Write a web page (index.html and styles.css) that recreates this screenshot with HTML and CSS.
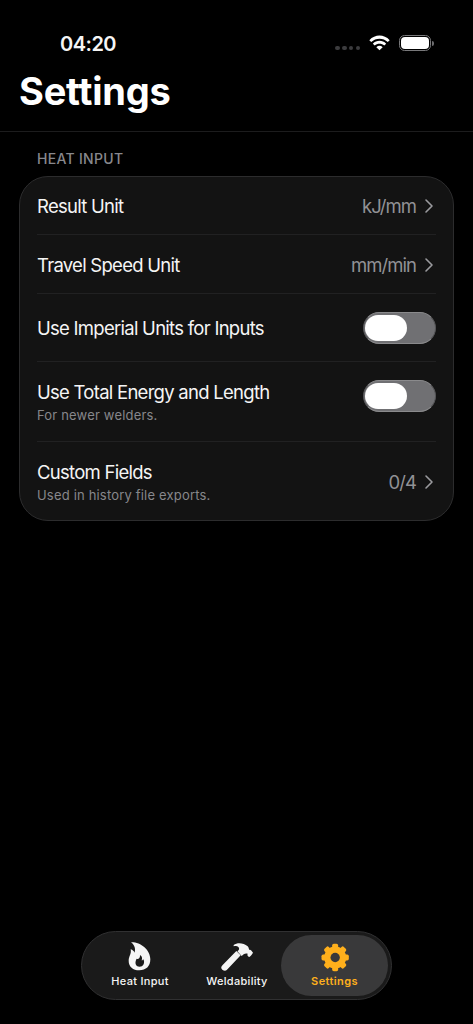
FILE: index.html
```html
<!DOCTYPE html>
<html lang="en">
<head>
  <meta charset="UTF-8" />
  <meta name="viewport" content="width=device-width, initial-scale=1" />
  <title>Settings</title>
  <link rel="stylesheet" href="styles.css">
</head>
<body>
  <div class="screen">
    <div class="status-bar">
      <span class="time">04:20</span>
      <div class="status-icons">
        <div class="dots"><i></i><i></i><i></i><i></i></div>
        <svg class="wifi" viewBox="0 0 66 48">
          <path d="M1 15 C19 -4 47 -4 65 15 L59 21 C45 7 21 7 7 21Z" />
          <path d="M12 26 C24 14 42 14 54 26 L48 32 C40 24 26 24 18 32Z" />
          <path d="M23 37 C29 31 37 31 43 37 L33 47Z" />
        </svg>
        <div class="battery"><div class="level"></div></div>
        <div class="battery-cap"></div>
      </div>
    </div>

    <header class="header">
      <h1>Settings</h1>
    </header>

    <main class="content">
      <h2>HEAT INPUT</h2>
      <div class="card">
        <div class="row row-result">
          <span class="label">Result Unit</span>
          <span class="value">kJ/mm</span>
          <svg class="chevron" viewBox="0 0 8 14"><path d="M1 1l6 6-6 6" /></svg>
        </div>
        <div class="row row-speed">
          <span class="label">Travel Speed Unit</span>
          <span class="value">mm/min</span>
          <svg class="chevron" viewBox="0 0 8 14"><path d="M1 1l6 6-6 6" /></svg>
        </div>
        <div class="row row-imperial">
          <span class="label">Use Imperial Units for Inputs</span>
          <div class="toggle"><div class="knob"></div></div>
        </div>
        <div class="row row-energy">
          <div class="text">
            <div class="label">Use Total Energy and Length</div>
            <div class="hint">For newer welders.</div>
          </div>
          <div class="toggle"><div class="knob"></div></div>
        </div>
        <div class="row row-custom">
          <div class="text">
            <div class="label">Custom Fields</div>
            <div class="hint">Used in history file exports.</div>
          </div>
          <span class="value">0/4</span>
          <svg class="chevron" viewBox="0 0 8 14"><path d="M1 1l6 6-6 6" /></svg>
        </div>
      </div>
    </main>

    <nav class="tab-bar">
      <div class="tab">
        <svg class="icon" viewBox="0 0 120 108">
          <path fill-rule="evenodd" d="M33 13 C62 12 91 36 91 64 C91 85 78 97 58 97 C39 97 26 86 26 68 C26 55 35 48 32 34 C38 36 42 40 44 44 C47 32 44 21 33 13Z M60 51 C61 60 54 65 50 62 C44 72 45 86 59 86 C70 86 73 77 72 69 C71 65 69 62 68 66 C66 68 64 68 66 63 C67 58 64 53 60 51Z" />
        </svg>
        <span>Heat Input</span>
      </div>
      <div class="tab">
        <svg class="icon" viewBox="6 0 120 108">
          <path d="M64 39 L77 52 L36 95 C32 100 27 99 22 95 C17 90 18 86 23 81Z" />
          <path d="M56 21 C68 12 86 15 98 25 C102 29 101 33 103 36 C106 34 109 37 114 44 C111 49 107 54 103 57 C98 55 96 51 98 47 C94 46 90 46 86 49 L80 54 L67 40 C73 36 74 31 70 27 C66 23 61 24 56 25Z" />
        </svg>
        <span>Weldability</span>
      </div>
      <div class="tab active">
        <svg class="icon" viewBox="0 0 120 108">
          <g transform="translate(60.5 58.5)">
            <circle r="33" />
            <rect x="-9" y="-41" width="18" height="82" rx="5" />
            <rect x="-9" y="-41" width="18" height="82" rx="5" transform="rotate(45)" />
            <rect x="-9" y="-41" width="18" height="82" rx="5" transform="rotate(90)" />
            <rect x="-9" y="-41" width="18" height="82" rx="5" transform="rotate(135)" />
            <circle class="hole" r="14" />
          </g>
        </svg>
        <span>Settings</span>
      </div>
    </nav>
  </div>
</body>
</html>
```
FILE: styles.css
```css
* { box-sizing: border-box; }

body {
  margin: 0;
  background: #000;
  color: #f5f5f5;
  font-family: Inter, "Liberation Sans", sans-serif;
}

.screen {
  display: flex;
  flex-direction: column;
  height: 1024px;
  width: 473px;
}

.status-bar {
  display: flex;
  justify-content: space-between;
  height: 68px;
  padding: 31px 39px 0 60px;
}

.time {
  font-size: 20px;
  line-height: 26px;
  font-weight: 600;
  letter-spacing: -0.5px;
}

.status-icons {
  display: flex;
  align-items: center;
  height: 24px;
}

.dots {
  display: flex;
  gap: 2.2px;
  margin: 10px 9px 0 0;
}

.dots i {
  width: 4.5px;
  height: 4.5px;
  border-radius: 50%;
  background: #3c3c3e;
}

.wifi {
  width: 21px;
  height: 16px;
  fill: #fff;
  margin-right: 9px;
}

.battery {
  width: 32px;
  height: 16px;
  padding: 1px;
  border: 1px solid #78787a;
  border-radius: 5.5px;
}

.level {
  height: 100%;
  border-radius: 4px;
  background: #fff;
}

.battery-cap {
  width: 2px;
  height: 5px;
  margin-left: 1px;
  border-radius: 0 2px 2px 0;
  background: #6c6c6e;
}

.header {
  height: 64px;
  padding-left: 19px;
  border-bottom: 1px solid #1c1c1d;
}

h1 {
  margin: 0;
  color: #fff;
  font-size: 38px;
  line-height: 46px;
  font-weight: 700;
  letter-spacing: -0.2px;
}

.content {
  flex: 1;
  padding: 17px 19px 0;
}

h2 {
  margin: 0 0 7px 18px;
  font-size: 14px;
  line-height: 20px;
  font-weight: 500;
  letter-spacing: 0.3px;
  color: #88888d;
}

.card {
  height: 345px;
  padding: 0 17px;
  border: 1px solid #2c2c2d;
  border-radius: 29px;
  background: #131313;
}

.row {
  display: flex;
  align-items: center;
  border-bottom: 1px solid #212122;
}

.row-result { height: 58px; }
.row-speed { height: 59px; padding-top: 1px; }
.row-imperial { height: 68px; }
.row-energy { height: 80px; }
.row-custom { height: 78px; padding-top: 2px; border-bottom: none; }

.label {
  flex: 1;
  padding: 1px 0;
  font-size: 18.5px;
  line-height: 24px;
  letter-spacing: -0.73px;
  white-space: nowrap;
}

.text {
  flex: 1;
  padding-top: 1px;
}

.row-custom .text {
  padding: 0 0 1px;
}

.hint {
  font-size: 13px;
  line-height: 20px;
  letter-spacing: 0.18px;
  color: #87878b;
}

.value {
  padding: 1px 0;
  font-size: 18.5px;
  line-height: 24px;
  letter-spacing: -0.95px;
  color: #919195;
}

.chevron {
  width: 8px;
  height: 14px;
  margin: 0 3px 0 9px;
  overflow: visible;
  fill: none;
  stroke: #9a9a9e;
  stroke-width: 1.6;
  stroke-linecap: round;
  stroke-linejoin: round;
}

.toggle {
  width: 73px;
  height: 32px;
  padding: 2px 1px;
  border: 1px solid #565658;
  border-top-color: #8a8a8c;
  border-bottom-color: #8a8a8c;
  border-radius: 16px;
  background: #707073;
}

.row-energy .toggle { margin-bottom: 11px; }

.knob {
  width: 42px;
  height: 26px;
  border-radius: 13px;
  background: #fff;
}

.tab-bar {
  display: flex;
  width: 311px;
  height: 69px;
  margin: 0 0 24px 81px;
  padding: 3px;
  border: 1px solid #303031;
  border-radius: 35px;
  background: #1a1a1a;
}

.tab {
  display: flex;
  flex-direction: column;
  align-items: center;
  width: 98px;
  padding-top: 3px;
  font-size: 11px;
  line-height: 15px;
  font-weight: 500;
  letter-spacing: 0.3px;
  fill: #f5f5f5;
}

.tab:first-child { margin-left: 6px; margin-right: -1px; }

.icon {
  width: 40px;
  height: 36px;
}

.active {
  width: 107px;
  height: 61px;
  margin-left: -5px;
  border-radius: 31px;
  background: #39393a;
  color: #ffb01c;
  fill: #ffb01c;
  font-weight: 600;
  letter-spacing: 0.4px;
}

.hole { fill: #39393a; }
```
